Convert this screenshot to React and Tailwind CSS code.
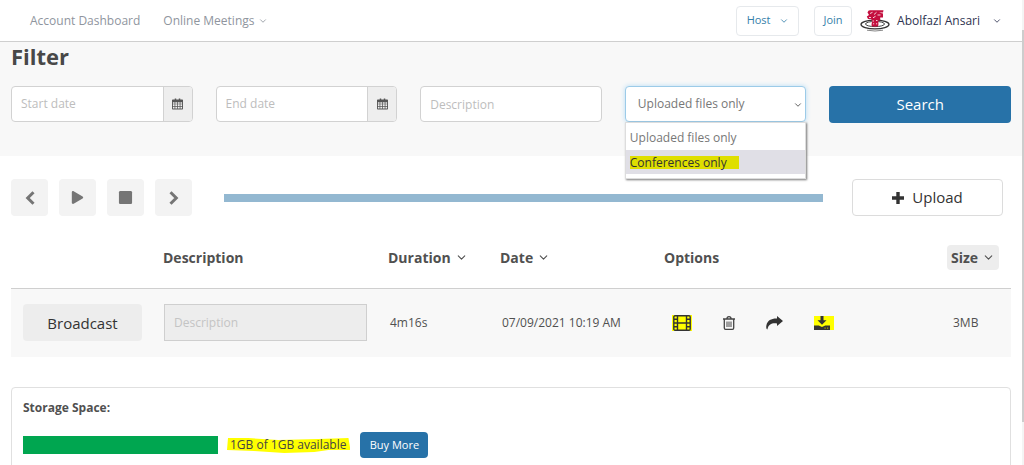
import React from 'react';
import { FaPlay, FaStop } from 'react-icons/fa';
import { FiChevronDown } from 'react-icons/fi';

const CalendarIcon = () => (
  <svg width="11" height="12" viewBox="0 0 12 12" fill="#555">
    <path d="M3 0h1.600v1H7.400V0H9v1h2.200q.8 0 .8.8v9.400q0 .8-.8.8H.8Q0 12 0 11.200V1.800Q0 1 .8 1H3z" />
    <path
      fill="#eee"
      d="M1 4h1.800v1.600H1zM3.600 4h2v1.600h-2zM6.400 4h2v1.600h-2zM9.200 4H11v1.600H9.200zM1 6.400h1.800v1.800H1zM3.600 6.400h2v1.800h-2zM6.400 6.400h2v1.800h-2zM9.200 6.400H11v1.800H9.200zM1 9h1.800v2H1zM3.600 9h2v2h-2zM6.400 9h2v2h-2zM9.200 9H11v2H9.200z"
    />
  </svg>
);

const FilmIcon = () => (
  <svg width="18" height="16" viewBox="0 0 18 16" fill="none" stroke="#333" strokeWidth="1.400">
    <rect x="0.800" y="0.800" width="16.400" height="14.400" rx="1.200" />
    <path d="M4.500 1v14M13.500 1v14M4.500 8h9M1 4.300h3.500M1 8h3.500M1 11.700h3.500M13.500 4.300H17M13.500 8H17M13.500 11.700H17" />
  </svg>
);

const TrashIcon = () => (
  <svg width="12" height="14" viewBox="0 0 12 14" fill="none" stroke="#444" strokeWidth="1.300">
    <path d="M0 3h12M3.800 3Q4 .7 6 .7T8.200 3M1.300 3.500V12q0 1.300 1.300 1.300h6.800q1.300 0 1.300-1.300V3.500" />
    <path strokeWidth="1" d="M4 5.500v5.500M6 5.500v5.500M8 5.500v5.500" />
  </svg>
);

const ShareIcon = () => (
  <svg width="17" height="14" viewBox="0 0 17 14" fill="#333">
    <path d="M11 0l6 5-6 5V7.400C6 6.800 2.400 8 1.400 13.600.2 13 0 11 .4 9.200 1.500 4.400 5.500 2.400 11 2.600z" />
  </svg>
);

const DownloadIcon = () => (
  <svg width="16" height="14" viewBox="0 0 16 14" fill="#333">
    <path d="M6.500 0h3v4.200h3L8 8.800 3.500 4.200h3z" />
    <path d="M0 9.400h4.800L8 11l3.200-1.600H16V14H0z" />
    <path fill="#aa0" d="M10.500 11.600h1.200v1.200h-1.200zM13 11.600h1.200v1.200H13z" />
  </svg>
);

const PlusIcon = () => (
  <svg width="12" height="12" viewBox="0 0 12 12" fill="#333">
    <path d="M4.300 0h3.400v4.300H12v3.400H7.700V12H4.300V7.700H0V4.300h4.300z" />
  </svg>
);

const AngleIcon = ({ d }) => (
  <svg width="10" height="14" viewBox="0 0 10 14" fill="none" stroke="currentColor" strokeWidth="3">
    <path d={d} />
  </svg>
);

const AvatarLogo = () => (
  <svg width="30" height="22" viewBox="0 0 30 22" fill="none">
    <ellipse cx="15" cy="14.500" rx="14" ry="4.300" stroke="#333" strokeWidth="1.300" />
    <ellipse cx="15" cy="14" rx="9.500" ry="2.600" stroke="#444" />
    <path d="M7 20.200q8 1.600 16 0" stroke="#888" />
    <path
      fill="#c4103f"
      d="M7.500 2.500Q8 .3 10 .3h13.500L23 2.500h-4l4 1v4h-2.800v3h-1.800v4.500q0 1.500-1.500 1.500h-4q-1.600 0-1.400-1.500l.5-3.500-.8-2.500H8L6.800 6.500 9 5z"
    />
    <path
      stroke="#fff"
      strokeWidth="0.800"
      d="M10 3.500l2.500-1.200M14 4.500l2.500-2.200M17.500 5h3M9 7.500h2M13 7.800l2.500-1.500M12.500 11h1.500M16 10.500h1.500M13 13.800h1.200M16 13.800h1.200"
    />
  </svg>
);

const DateField = ({ id, label }) => (
  <div className="flex h-9 overflow-hidden rounded border border-[#d2d2d2] bg-white">
    <input
      id={id}
      type="text"
      aria-label={label}
      placeholder={label}
      className="w-full min-w-0 flex-1 px-[9px] text-xs placeholder:text-[#bdbdbd] outline-none"
    />
    <button
      type="button"
      aria-label={`Pick ${label}`}
      className="flex w-[29px] items-center justify-center border-l border-[#d2d2d2] bg-[#eee]"
    >
      <CalendarIcon />
    </button>
  </div>
);

const playerControls = [
  { label: 'Previous', icon: <AngleIcon d="M8.500 1.200L2.700 7l5.800 5.800" /> },
  { label: 'Play', icon: <FaPlay size={13} /> },
  { label: 'Stop', icon: <FaStop size={15} /> },
  { label: 'Next', icon: <AngleIcon d="M1.500 1.200L7.300 7l-5.800 5.800" /> },
];

const SortButton = ({ children, active }) => (
  <button
    type="button"
    className={
      active
        ? '-ml-1 flex h-[25px] items-center gap-1 rounded bg-[#ededed] px-1 font-bold'
        : 'flex h-[25px] items-center gap-1 font-bold'
    }
  >
    {children}
    <FiChevronDown size={13} />
  </button>
);

const Header = () => (
  <header className="flex h-[42px] items-center justify-between border-b border-[#cfcfcf] bg-white pr-[20px] pl-[30px]">
    <nav className="flex items-center gap-[23px] text-xs text-[#8f959e]">
      <a href="#dashboard">Account Dashboard</a>
      <a href="#meetings" className="flex items-center gap-1">
        Online Meetings
        <FiChevronDown size={10} />
      </a>
    </nav>
    <div className="flex items-center text-[#2e3350]">
      <button
        type="button"
        className="flex h-[30px] w-[63px] items-center justify-center gap-2 rounded-sm border border-[#e6e9ec] text-[11px] text-[#3580a9]"
      >
        Host
        <FiChevronDown size={10} />
      </button>
      <button
        type="button"
        className="mr-2 ml-[15px] h-[30px] w-[38px] rounded-sm border border-[#e6e9ec] text-[11px] text-[#3580a9]"
      >
        Join
      </button>
      <AvatarLogo />
      <button type="button" className="ml-[7px] flex items-center gap-3 text-xs">
        Abolfazl Ansari
        <FiChevronDown size={10} />
      </button>
    </div>
  </header>
);

const Filter = () => (
  <section className="h-[114px] bg-[#f8f8f8] px-[11px]">
    <h2 className="mb-4 text-[22px] leading-7 font-bold text-[#484848]">Filter</h2>
    <form className="grid grid-cols-5 gap-[23px]">
      <DateField id="start" label="Start date" />
      <DateField id="end" label="End date" />
      <input
        type="text"
        aria-label="Description"
        placeholder="Description"
        className="h-9 min-w-0 rounded border border-[#d2d2d2] bg-white px-[9px] text-xs placeholder:text-[#bdbdbd] outline-none"
      />
      <div className="relative">
        <select
          aria-label="File type"
          className="h-9 w-full appearance-none rounded border border-[#9ccbe8] bg-white px-3 text-xs text-[#777] shadow-[0_0_5px_#b5dcf5]"
        >
          <option>Uploaded files only</option>
          <option>Conferences only</option>
        </select>
        <FiChevronDown size={10} className="absolute top-[14px] right-[3px] text-[#444]" />
        {/* Open list */}
        <ul className="absolute top-9 left-0 z-10 w-full border border-[#ddd] bg-white pt-[2px] pb-1 text-xs leading-[25px] text-[#777] shadow-[1px_1px_2px_#777]">
          <li className="px-1">Uploaded files only</li>
          <li className="flex h-6 items-center bg-[#e0dfe6] px-1 text-[#333]">
            <mark className="bg-[#dfdf00] pr-3 leading-[13px] text-[#333]">Conferences only</mark>
          </li>
        </ul>
      </div>
      <button type="submit" className="h-[37px] rounded bg-[#2772a8] text-[15px] text-white">
        Search
      </button>
    </form>
  </section>
);

const Player = () => (
  <section className="flex items-center pt-[23px] pr-[19px] pl-[11px]">
    <div className="flex gap-[11px]">
      {playerControls.map((control) => (
        <button
          key={control.label}
          type="button"
          aria-label={control.label}
          className="flex size-[37px] items-center justify-center rounded bg-[#f3f3f3] text-[#757575]"
        >
          {control.icon}
        </button>
      ))}
    </div>
    <div className="mr-[29px] ml-8 h-2 flex-1 bg-[#93b8d1]" />
    <button
      type="button"
      className="flex h-[37px] w-[151px] items-center justify-center gap-2 rounded border border-[#dcdcdc] bg-white text-[15px] text-[#333]"
    >
      <PlusIcon />
      Upload
    </button>
  </section>
);

const Files = () => (
  <section className="px-[11px] pt-3">
    <table className="w-full table-fixed text-left text-[#505050]">
      <colgroup>
        <col className="w-[15.2%]" />
        <col className="w-[22.5%]" />
        <col className="w-[11.2%]" />
        <col className="w-[16.4%]" />
        <col className="w-[28.7%]" />
        <col />
      </colgroup>
      <thead>
        <tr className="h-[60px] border-b border-[#cfcfcf] text-sm">
          <th aria-label="Broadcast" />
          <th>Description</th>
          <th>
            <SortButton>Duration</SortButton>
          </th>
          <th>
            <SortButton>Date</SortButton>
          </th>
          <th>Options</th>
          <th>
            <SortButton active>Size</SortButton>
          </th>
        </tr>
      </thead>
      <tbody>
        <tr className="h-[69px] bg-[#f8f8f8] text-xs">
          <td className="pl-3">
            <button type="button" className="h-[37px] w-[119px] rounded bg-[#ededed] text-[15px] text-[#333]">
              Broadcast
            </button>
          </td>
          <td className="pr-[21px] pl-px">
            <input
              type="text"
              disabled
              aria-label="File description"
              placeholder="Description"
              className="h-[37px] w-full border border-[#cfcfcf] bg-[#ededed] px-[9px] text-xs placeholder:text-[#c4c4c4]"
            />
          </td>
          <td className="pl-[2px]">4m16s</td>
          <td className="pl-[2px]">07/09/2021 10:19 AM</td>
          <td>
            <div className="flex items-center gap-[31px] pl-2">
              <button type="button" aria-label="Convert" className="bg-[#ff0] px-px">
                <FilmIcon />
              </button>
              <button type="button" aria-label="Delete">
                <TrashIcon />
              </button>
              <button type="button" aria-label="Share">
                <ShareIcon />
              </button>
              <button type="button" aria-label="Download" className="bg-[#ff0] pr-1">
                <DownloadIcon />
              </button>
            </div>
          </td>
          <td className="pl-[2px]">3MB</td>
        </tr>
      </tbody>
    </table>
  </section>
);

const Storage = () => (
  <section className="mx-[11px] mt-[30px] h-32 rounded-sm border border-[#e0e0e0] px-[11px] pt-3 text-xs">
    <h3 className="leading-4 font-bold text-[#505050]">Storage Space:</h3>
    <div className="mt-4 flex items-center">
      <div className="h-[18px] w-[195px] bg-[#00a650]" />
      <p className="relative ml-3 leading-4 text-[#444]">
        <svg
          className="absolute -inset-x-1 top-0 h-4 w-[calc(100%+8px)]"
          viewBox="0 0 124 16"
          preserveAspectRatio="none"
          fill="#ff0"
        >
          <path d="M2 1h20l30 2 40-1 30-1 2 12-22 0-14 2-30 1-30-2-27-1z" />
        </svg>
        <span className="relative">1GB of 1GB available</span>
      </p>
      <button type="button" className="ml-[14px] h-[26px] w-[68px] rounded-sm bg-[#2772a8] text-[11px] text-white">
        Buy More
      </button>
    </div>
  </section>
);

const App = () => {
  return (
    <div className="flex h-screen overflow-hidden bg-white font-['Open_Sans',sans-serif]">
      <main className="min-w-0 flex-1">
        <Header />
        <Filter />
        <Player />
        <Files />
        <Storage />
      </main>
      {/* Scroll track */}
      <div className="w-[2px] bg-[#f4f4f4] pt-[30px]">
        <div className="h-[392px] bg-[#cdcdcd]" />
      </div>
    </div>
  );
};

export default App;
